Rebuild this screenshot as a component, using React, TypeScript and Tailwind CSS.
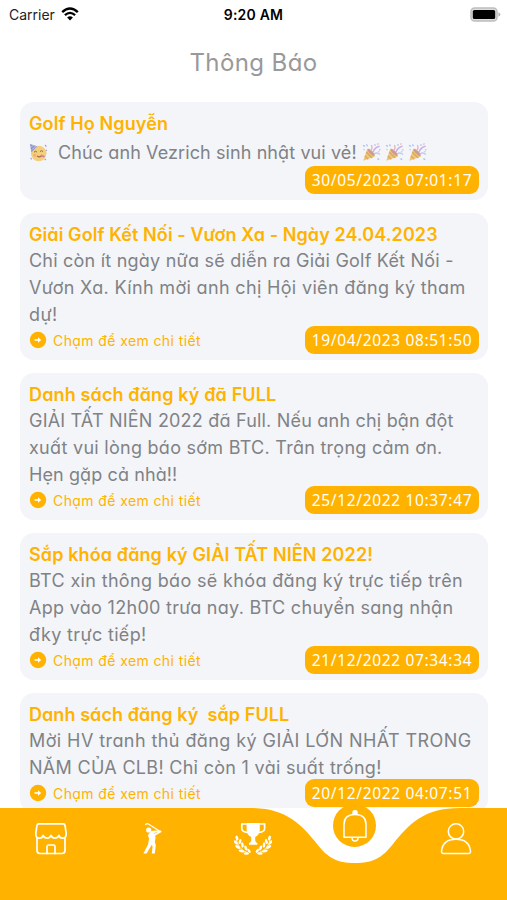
import { clsx } from "clsx";

interface Line {
  text: string;
  tracking: string;
}

interface Notice {
  id: number;
  title: string;
  titleTracking: string;
  lines: Line[];
  date: string;
  hasDetail?: boolean;
  emoji?: boolean;
}

const notices: Notice[] = [
  {
    id: 1,
    title: "Golf Họ Nguyễn",
    titleTracking: "tracking-[0.12px]",
    lines: [{ text: "Chúc anh Vezrich sinh nhật vui vẻ!", tracking: "tracking-[0.1px]" }],
    date: "30/05/2023 07:01:17",
    emoji: true,
  },
  {
    id: 2,
    title: "Giải Golf Kết Nối - Vươn Xa - Ngày 24.04.2023",
    titleTracking: "tracking-[0.09px]",
    lines: [
      { text: "Chỉ còn ít ngày nữa sẽ diễn ra Giải Golf Kết Nối -", tracking: "tracking-[0.22px]" },
      { text: "Vươn Xa. Kính mời anh chị Hội viên đăng ký tham", tracking: "tracking-[0.34px]" },
      { text: "dự!", tracking: "tracking-[0.4px]" },
    ],
    date: "19/04/2023 08:51:50",
    hasDetail: true,
  },
  {
    id: 3,
    title: "Danh sách đăng ký đã FULL",
    titleTracking: "tracking-[0.14px]",
    lines: [
      { text: "GIẢI TẤT NIÊN 2022 đã Full. Nếu anh chị bận đột", tracking: "tracking-[0.2px]" },
      { text: "xuất vui lòng báo sớm BTC. Trân trọng cảm ơn.", tracking: "tracking-[0.27px]" },
      { text: "Hẹn gặp cả nhà!!", tracking: "tracking-[0.1px]" },
    ],
    date: "25/12/2022 10:37:47",
    hasDetail: true,
  },
  {
    id: 4,
    title: "Sắp khóa đăng ký GIẢI TẤT NIÊN 2022!",
    titleTracking: "tracking-[0.12px]",
    lines: [
      { text: "BTC xin thông báo sẽ khóa đăng ký trực tiếp trên", tracking: "tracking-[0.34px]" },
      { text: "App vào 12h00 trưa nay. BTC chuyển sang nhận", tracking: "tracking-[0.3px]" },
      { text: "đky trực tiếp!", tracking: "tracking-[0.34px]" },
    ],
    date: "21/12/2022 07:34:34",
    hasDetail: true,
  },
  {
    id: 5,
    title: "Danh sách đăng ký  sắp FULL",
    titleTracking: "tracking-[0.07px]",
    lines: [
      { text: "Mời HV tranh thủ đăng ký GIẢI LỚN NHẤT TRONG", tracking: "tracking-[0.42px]" },
      { text: "NĂM CỦA CLB! Chỉ còn 1 vài suất trống!", tracking: "tracking-[0.3px]" },
    ],
    date: "20/12/2022 04:07:51",
    hasDetail: true,
  },
];

function PartyFace() {
  return (
    <svg width="19" height="19" viewBox="0 0 19 19" className="shrink-0">
      <circle cx="9.7" cy="10.5" r="7.8" fill="#f3cf7c" />
      <path d="M1 1l7 2.2-5.6 6z" fill="#8d8fcc" />
      <path d="M2 4l3-2M2.4 7l4.5-4" stroke="#b9c8ee" strokeWidth="1" />
      <path d="M5 9.2q1.5-2 3 0M11 8.6q1.5-2 3 0" fill="none" stroke="#8f6a3c" strokeWidth="1" />
      <path d="M8 13q3 2 5-.8" fill="none" stroke="#b0654b" strokeWidth="1.2" />
      <path d="M12 12.4l3.6 1.4" stroke="#cf86a3" strokeWidth="1.8" />
      <circle cx="5.6" cy="12.2" r="1.5" fill="#eeb07a" />
      <path d="M16 2l1.4 1.6M17 7l1 .6M1.6 15l1.2 1.4M15.5 17l1.5-1" stroke="#a7a5d8" strokeWidth="1.3" />
    </svg>
  );
}

function Popper() {
  return (
    <svg width="19" height="19" viewBox="0 0 19 19" className="shrink-0">
      <path d="M5.4 5.6L13 13.4 1.2 17.8z" fill="#edc670" />
      <path d="M4.2 9l6 6M2.8 13l3.4 3.4" stroke="#d9a56e" strokeWidth="1.2" />
      <ellipse cx="9.2" cy="9.4" rx="4.8" ry="1.5" transform="rotate(46 9.2 9.4)" fill="#cf9a90" />
      <path d="M8.6 7.5Q11 5.5 9.4 2" fill="none" stroke="#eab0bd" strokeWidth="1.3" />
      <path d="M11 9Q13 4 17.6 3.2" fill="none" stroke="#c6b0e6" strokeWidth="1.5" />
      <path d="M12 11q3-2.4 6 .6" fill="none" stroke="#b6cdf3" strokeWidth="1.4" />
      <path d="M1 2.4l2 1M4.5 1.4l1 1.8M12.6 1.2l.8 1.6M17 7l1.4-.4M15.4 15.6l1.8 1" stroke="#aec2f0" strokeWidth="1.3" />
      <path d="M1.4 6.4l1.4.6M15 1.4l1.8-.8M15.8 9l1.6-.6" stroke="#f0c0c4" strokeWidth="1.3" />
    </svg>
  );
}

function NoticeCard({ notice }: { notice: Notice }) {
  return (
    <article className="shrink-0 rounded-[14px] bg-[#f3f5f9] pt-[9px] pr-[9px] pb-[6px] pl-[9px]">
      <h2
        className={clsx(
          "h-[25px] whitespace-pre text-[18px] leading-[25px] font-semibold text-[#ffb300]",
          notice.titleTracking,
        )}
      >
        {notice.title}
      </h2>
      <div
        className={clsx(
          "text-[18px] leading-[27px] text-[#808285]",
          notice.emoji ? "mt-[3px]" : "-mb-[2px]",
        )}
      >
        {notice.lines.map((line) => (
          <div key={line.text} className="flex h-[27px] items-center whitespace-pre">
            {notice.emoji && (
              <span className="mr-[10px] flex">
                <PartyFace />
              </span>
            )}
            <span className={line.tracking}>{line.text}</span>
            {notice.emoji && (
              <span className="ml-[5px] flex gap-[4px]">
                <Popper />
                <Popper />
                <Popper />
              </span>
            )}
          </div>
        ))}
      </div>
      <div className="flex h-[28px] items-center">
        {notice.hasDetail && (
          <a className="flex items-center gap-[6px] text-[14px] tracking-[0.4px] text-[#ffb300]">
            <svg width="18" height="18" viewBox="0 0 18 18">
              <circle cx="9" cy="9" r="8.2" fill="#ffb300" />
              <path d="M5.5 9h4.5" stroke="#fff" strokeWidth="1.6" />
              <path d="M9 6.3l3.2 2.7L9 11.7z" fill="#fff" />
            </svg>
            Chạm để xem chi tiết
          </a>
        )}
        <time className="ml-auto flex h-[28px] w-[174px] items-center justify-center rounded-[9px] bg-[#ffb300] pt-[2px] font-['Noto_Sans',sans-serif] text-[15.5px] tracking-[0.65px] whitespace-nowrap text-white">
          {notice.date}
        </time>
      </div>
    </article>
  );
}

function StatusBar() {
  return (
    <header className="grid h-[28px] shrink-0 grid-cols-3 items-center text-[14px] text-black [font-feature-settings:normal]">
      <div className="flex items-center gap-[6px] pl-[9px] text-[#222]">
        Carrier
        <svg width="18" height="14" viewBox="0 0 18 14">
          <path d="M1.2 5.1Q9-2.2 16.8 5.1" fill="none" stroke="#000" strokeWidth="2.4" />
          <path d="M3.9 8.2Q9 3.6 14.1 8.2" fill="none" stroke="#000" strokeWidth="2.3" />
          <path d="M6.1 10.5Q9 8 11.9 10.5L9 13.5z" />
        </svg>
      </div>
      <div className="text-center font-semibold tracking-[0.2px]">9:20 AM</div>
      <div className="flex justify-end pr-[6px]">
        <svg width="31" height="15" viewBox="0 0 31 15">
          <rect x="1" y="1" width="26" height="13" rx="3.6" fill="#ddd" stroke="#bdbdbd" strokeWidth="1.5" />
          <rect x="2.8" y="3" width="22.4" height="9" rx="1.6" />
          <path d="M28.4 5.2q2 .8 2 2.3t-2 2.3z" fill="#b5b5b5" />
        </svg>
      </div>
    </header>
  );
}

function ShopIcon() {
  return (
    <svg width="34" height="34" viewBox="0 0 34 34" fill="none" stroke="#fff" strokeWidth="1.7" strokeLinejoin="round" strokeLinecap="round">
      <path d="M5 1.8h24q1.8 0 2 1.6l1.2 8q.2 4.8-3.6 4.8-3.2 0-3.6-2.8-1.4 2.8-4.2 2.8-2.6 0-3.8-2.8-1.2 2.8-3.8 2.8-2.8 0-4.2-2.8-.4 2.8-3.6 2.8-3.8 0-3.6-4.8l1.2-8q.2-1.6 2-1.6z" />
      <path d="M3 16v12.5q0 3 3 3h22q3 0 3-3V16" />
      <path d="M13 31.5v-7q0-1.5 1.5-1.5h5q1.5 0 1.5 1.5v7" />
    </svg>
  );
}

function GolferIcon() {
  return (
    <svg width="20" height="34" viewBox="0 0 20 34">
      <path d="M3.4 3Q4.2 1.2 6 1.8L18.6 9.8" fill="none" stroke="#fff" strokeWidth="1.3" />
      <circle cx="6.7" cy="8" r="2.6" fill="#fff" />
      <path d="M18.6 9.4L10 14.4" stroke="#fff" strokeWidth="1.8" strokeLinecap="round" />
      <path d="M7 11.4q-2 2.6.2 4.6L6 22.4 1.4 31.6h3.2L9.6 23l1 1.2-.8 7.4h3l1-8.4-1-3.4.8-4.4-1.4-4.4 4.8-1.4-.4-1.4-7 .8z" fill="#fff" />
    </svg>
  );
}

function TrophyIcon() {
  return (
    <svg width="38" height="34" viewBox="0 0 38 34" fill="#fff">
      <path d="M12.6 1h13.2v6.5q0 5.4-4.6 7.6v3.5q0 1.7 2.2 2.7v1.5h-8.4v-1.5q2.2-1 2.2-2.7v-3.5q-4.6-2.2-4.6-7.6z" />
      <path d="M13 2H7.8v4.5q0 3.5 6 4M25.4 2h5.2v4.5q0 3.5-6 4" fill="none" stroke="#fff" strokeWidth="1.7" />
      <g id="laurel">
        <path d="M2 14.5Q2.5 27 15 31.5" fill="none" stroke="#fff" strokeWidth=".8" />
        <ellipse cx="3" cy="16" rx="1.3" ry="2.5" transform="rotate(-20 3 16)" />
        <ellipse cx="1.8" cy="20.5" rx="1.3" ry="2.6" transform="rotate(-40 1.8 20.5)" />
        <ellipse cx="6" cy="19.5" rx="1.3" ry="2.6" transform="rotate(15 6 19.5)" />
        <ellipse cx="3.7" cy="25" rx="1.3" ry="2.8" transform="rotate(-60 3.7 25)" />
        <ellipse cx="8.4" cy="23" rx="1.3" ry="2.7" transform="rotate(-5 8.4 23)" />
        <ellipse cx="7.6" cy="29" rx="1.3" ry="3" transform="rotate(-75 7.6 29)" />
        <ellipse cx="11.8" cy="26" rx="1.3" ry="2.7" transform="rotate(-20 11.8 26)" />
        <ellipse cx="12.5" cy="31.5" rx="1.2" ry="2.8" transform="rotate(-88 12.5 31.5)" />
        <ellipse cx="15" cy="28.8" rx="1.2" ry="2.4" transform="rotate(-35 15 28.8)" />
      </g>
      <use href="#laurel" transform="matrix(-1 0 0 1 38.4 0)" />
    </svg>
  );
}

function BellIcon() {
  return (
    <svg width="26" height="34" viewBox="0 0 26 34" fill="none" stroke="#fff" strokeWidth="1.5">
      <path d="M2 28.2V15.5Q2 5.5 13 5.5T24 15.5V28.2z" strokeLinejoin="round" />
      <path d="M10 28.4q0 3.6 3 3.6t3-3.6" />
      <path d="M10.3 5.8V3.4q0-2.4 2.7-2.4t2.7 2.4v2.4z" fill="#fff" stroke="none" />
    </svg>
  );
}

function UserIcon() {
  return (
    <svg width="32" height="34" viewBox="0 0 32 34" fill="none" stroke="#fff" strokeWidth="1.5">
      <circle cx="16" cy="9.4" r="7.7" />
      <path d="M3.4 31.4q-2 0-1.9-2Q2.6 17.2 16 17.2T30.5 29.4q.1 2-1.9 2z" />
    </svg>
  );
}

function TabBar() {
  return (
    <nav className="relative h-[92px] shrink-0 bg-white">
      <svg width="507" height="92" viewBox="0 0 507 92" className="absolute inset-0">
        <path
          d="M0 0H250C286 0 301 16 317 36C328 50 337 55 355 55C373 55 382 50 393 36C409 16 424 0 460 0H507V92H0Z"
          fill="#ffb300"
        />
      </svg>
      <div className="relative grid grid-cols-5 justify-items-center">
        <span className="mt-[14px]"><ShopIcon /></span>
        <span className="mt-[14px]"><GolferIcon /></span>
        <span className="mt-[14px]"><TrophyIcon /></span>
        <span className="-mt-[4px] flex size-[43px] items-center justify-center rounded-full bg-[#ffb300]">
          <BellIcon />
        </span>
        <span className="mt-[14px]"><UserIcon /></span>
      </div>
    </nav>
  );
}

export default function App() {
  return (
    <div className="flex h-[900px] w-[507px] flex-col overflow-hidden bg-white font-['Inter','Noto_Sans',sans-serif] [font-feature-settings:'cv11']">
      <StatusBar />
      <h1 className="mt-[17px] h-[36px] shrink-0 text-center text-[24px] leading-[36px] tracking-[0.4px] text-[#999]">
        Thông Báo
      </h1>
      <main className="mt-[21px] flex min-h-0 flex-1 flex-col gap-[13px] overflow-hidden pr-[19px] pl-[20px]">
        {notices.map((notice) => (
          <NoticeCard key={notice.id} notice={notice} />
        ))}
      </main>
      <TabBar />
    </div>
  );
}
